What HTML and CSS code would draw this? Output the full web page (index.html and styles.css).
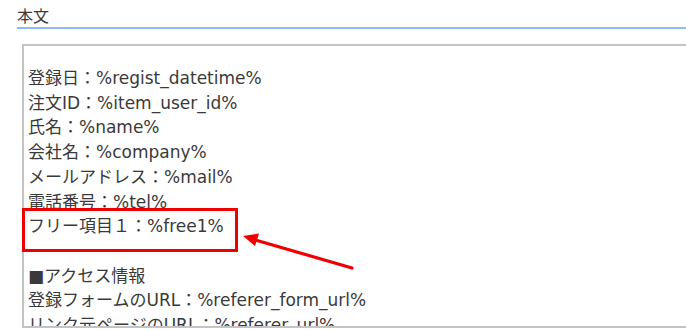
FILE: index.html
```html
<!DOCTYPE html>
<html lang="ja">
<head>
    <meta charset="UTF-8">
    <title>本文</title>
    <link rel="stylesheet" href="styles.css">
</head>
<body>

<div class="field">
    <div class="field-label">本文</div>

    <div class="body-box">
        <div class="line">登録日：%regist_datetime%</div>
        <div class="line">注文ID：%item_user_id%</div>
        <div class="line">氏名：%name%</div>
        <div class="line">会社名：%company%</div>
        <div class="line">メールアドレス：%mail%</div>
        <div class="line">電話番号：%tel%</div>
        <div class="line">フリー項目１：%free1%</div>
        <div class="line">&nbsp;</div>
        <div class="line">■アクセス情報</div>
        <div class="line">登録フォームのURL：%referer_form_url%</div>
        <div class="line">リンク元ページのURL：%referer_url%</div>
    </div>
</div>

<div class="mark-box"></div>
<svg class="mark-arrow" width="686" height="330" viewBox="0 0 686 330">
    <line x1="352" y1="268" x2="252" y2="239" stroke="#ee0000" stroke-width="3.2" stroke-linecap="round"/>
    <polygon points="243,236 259,233.5 255,246" fill="#ee0000"/>
</svg>

</body>
</html>
```

FILE: styles.css
```css
body {
    margin: 0;
    background: #ffffff;
    font-family: "Noto Sans CJK JP", "Noto Sans", sans-serif;
    color: #3a3a3a;
    height: 330px;
    overflow: hidden;
    position: relative;
}
.field {
    padding-top: 4px;
}
.field-label {
    margin-left: 17px;
    font-size: 16px;
    line-height: 22px;
    padding-bottom: 1px;
    border-bottom: 2px solid #8fbaf0;
}
.body-box {
    margin-top: 15px;
    margin-left: 22px;
    height: 284px;
    border-top: 2px solid #c4c4c4;
    border-left: 2px solid #c4c4c4;
    border-bottom: 2px solid #c4c4c4;
    padding: 20px 0 0 4px;
    overflow: hidden;
    box-sizing: border-box;
}
.line {
    font-family: "DejaVu Sans", "Noto Sans CJK JP", sans-serif;
    font-size: 17px;
    line-height: 24.7px;
    white-space: nowrap;
}
.mark-box {
    position: absolute;
    left: 22px;
    top: 208px;
    width: 216px;
    height: 44px;
    border: 3px solid #ee0000;
    box-sizing: border-box;
}
.mark-arrow {
    position: absolute;
    left: 0;
    top: 0;
}
```
